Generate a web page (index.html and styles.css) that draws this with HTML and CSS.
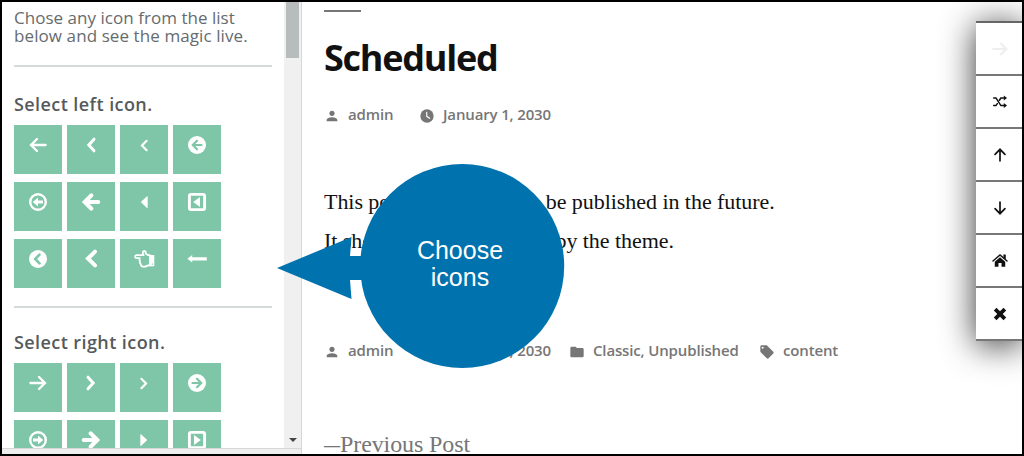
FILE: index.html
```
<!DOCTYPE html>
<html>

<head>
  <meta charset="utf-8">
  <link rel="stylesheet" href="styles.css">
  <title>Scheduled</title>
</head>

<body>
  <svg class="defs">
    <symbol id="arrow" viewBox="0 0 20 20">
      <path class="line" d="M17.600 10H3.500M9 4L3 10L9 16" stroke-width="2.300"/>
    </symbol>
    <symbol id="thin-arrow" viewBox="0 0 20 20">
      <path class="line" d="M16.500 10H4M9.200 4.500L3.700 10L9.200 15.500" stroke-width="1.900"/>
    </symbol>
    <symbol id="chevron" viewBox="0 0 20 20">
      <path class="line" d="M13 4.2L7.8 10L13 15.8" stroke-width="3"/>
    </symbol>
    <symbol id="angle" viewBox="0 0 20 20">
      <path class="line" d="M12.6 5.8L8 10.5L12.6 15.2" stroke-width="2.200"/>
    </symbol>
    <symbol id="circle-arrow" viewBox="0 0 20 20">
      <circle cx="10" cy="10" r="9"/>
      <path class="line cut" d="M14.500 10H6M10 5.8L5.8 10L10 14.2" stroke-width="2.2"/>
    </symbol>
    <symbol id="ring-arrow" viewBox="0 0 20 20">
      <circle class="line" cx="10" cy="10" r="7.8" stroke-width="2.4"/>
      <path d="M4.8 10L10 5.5V8.4H15V11.6H10V14.5Z"/>
    </symbol>
    <symbol id="bold-arrow" viewBox="0 0 20 20">
      <path class="line" d="M17.2 10H6M10.3 3.4L3.8 10L10.3 16.6" stroke-width="4.2"/>
    </symbol>
    <symbol id="caret" viewBox="0 0 20 20">
      <path d="M6.8 10L13 4.2Q13.7 4 13.7 5V15.2Q13.7 16.2 13 16Z"/>
    </symbol>
    <symbol id="square-caret" viewBox="0 0 20 20">
      <rect class="line" x="2.4" y="2.4" width="15.2" height="15.2" rx="1.5" stroke-width="2.9"/>
      <path d="M6.2 10L13 5V15Z"/>
    </symbol>
    <symbol id="circle-chevron" viewBox="0 0 20 20">
      <circle cx="10" cy="10" r="9"/>
      <path class="line cut" d="M11.5 5.6L7.2 10L11.5 14.4" stroke-width="2.6"/>
    </symbol>
    <symbol id="bold-chevron" viewBox="0 0 20 20">
      <path class="line" d="M14 2.600L7 9.500L14 16.400" stroke-width="4"/>
    </symbol>
    <symbol id="hand" viewBox="0 0 21 20">
      <path class="line" stroke-linejoin="round" d="M16 6.200H14.200L11.700 4.500V3Q11 1.600 9.800 2Q8.600 2.300 8.800 4L9.600 6.200H2.700Q1 6.300 1.100 7.700Q1.200 9.100 2.700 9.200H5.800Q5 11 6 12.200Q5.300 14 6.700 15Q6.800 17.400 9 17.600H11.500L14 16.400H16" stroke-width="1.800"/>
      <path d="M15 6H20.300V17.300H15Z"/>
      <path class="line cut" d="M18.300 14.800V15.400" stroke-width="1"/>
    </symbol>
    <symbol id="long-arrow" viewBox="0 0 20 20">
      <path d="M0.4 9.8L5.2 6V8.200H19.8V11.400H5.2V13.6Z"/>
    </symbol>
    <symbol id="person" viewBox="0 0 24 24">
      <path d="M12 12c2.2 0 4-1.8 4-4s-1.800-4-4-4-4 1.800-4 4 1.800 4 4 4zm0 2c-2.700 0-8 1.300-8 4v2h16v-2c0-2.700-5.300-4-8-4z"/>
    </symbol>
    <symbol id="clock" viewBox="0 0 24 24">
      <circle cx="12" cy="12" r="10"/>
      <path class="line cut-white" d="M11.600 6.500V12.500L16 15.500" stroke-width="1.700"/>
    </symbol>
    <symbol id="folder" viewBox="0 0 24 24">
      <path d="M10 4H4c-1.100 0-2 .9-2 2v12c0 1.100.9 2 2 2h16c1.100 0 2-.9 2-2V8c0-1.100-.9-2-2-2h-8l-2-2z"/>
    </symbol>
    <symbol id="tag" viewBox="0 0 24 24">
      <path fill-rule="evenodd" d="M21.400 11.600l-9-9C12 2.200 11.500 2 11 2H4c-1.100 0-2 .9-2 2v7c0 .5.200 1 .6 1.400l9 9c.8.8 2 .8 2.800 0l7-7c.8-.8.8-2 0-2.800zM5.500 7a1.500 1.500 0 1 1 0-3 1.500 1.500 0 0 1 0 3z"/>
    </symbol>
    <symbol id="shuffle" viewBox="0 0 20 20">
      <path class="line" d="M3 5.500H5.500L11 14H15M3 14H5.500L7 11.800M9.300 8L11 5.500H15" stroke-width="1.700"/>
      <path d="M14.200 2.700L17.800 5.500L14.200 8.300ZM14.200 11.200L17.800 14L14.200 16.800Z"/>
    </symbol>
    <symbol id="home" viewBox="0 0 20 20">
      <path class="line" d="M2.200 10L10 3.400L17.800 10" stroke-width="1.600"/>
      <path d="M13.800 2.800H16.400V8.200L13.800 6ZM4.200 10.800L10 5.800L15.800 10.800V16.500H11.700V12.300H8.300V16.500H4.200Z"/>
    </symbol>
    <symbol id="cross" viewBox="0 0 20 20">
      <path class="line butt" d="M4.600 4.600L15.400 15.400M15.400 4.600L4.600 15.400" stroke-width="4.200"/>
    </symbol>
  </svg>

  <div class="screen">
    <div class="sidebar">
      <div class="panel">
        <div class="controls">
          <p class="hint">Chose any icon from the list<br><span class="hint-end">below and see the magic live.</span></p>
          <hr>
          <h3>Select left icon.</h3>
          <div class="icons">
            <div class="tile"><svg><use href="#arrow"/></svg></div>
            <div class="tile"><svg><use href="#chevron"/></svg></div>
            <div class="tile"><svg><use href="#angle"/></svg></div>
            <div class="tile"><svg><use href="#circle-arrow"/></svg></div>
            <div class="tile"><svg><use href="#ring-arrow"/></svg></div>
            <div class="tile"><svg><use href="#bold-arrow"/></svg></div>
            <div class="tile"><svg><use href="#caret"/></svg></div>
            <div class="tile"><svg><use href="#square-caret"/></svg></div>
            <div class="tile"><svg><use href="#circle-chevron"/></svg></div>
            <div class="tile"><svg><use href="#bold-chevron"/></svg></div>
            <div class="tile"><svg class="wide"><use href="#hand"/></svg></div>
            <div class="tile"><svg><use href="#long-arrow"/></svg></div>
          </div>
          <hr class="second">
          <h3 class="right-title">Select right icon.</h3>
          <div class="icons right">
            <div class="tile"><svg><use href="#arrow"/></svg></div>
            <div class="tile"><svg><use href="#chevron"/></svg></div>
            <div class="tile"><svg><use href="#angle"/></svg></div>
            <div class="tile"><svg><use href="#circle-arrow"/></svg></div>
            <div class="tile"><svg><use href="#ring-arrow"/></svg></div>
            <div class="tile"><svg><use href="#bold-arrow"/></svg></div>
            <div class="tile"><svg><use href="#caret"/></svg></div>
            <div class="tile"><svg><use href="#square-caret"/></svg></div>
          </div>
        </div>
        <div class="scrollbar">
          <div class="thumb"></div>
          <div class="down"></div>
        </div>
      </div>
      <div class="sidebar-footer"></div>
    </div>

    <div class="article">
      <div class="rule"></div>
      <h1>Scheduled</h1>
      <div class="meta">
        <span class="item author"><svg><use href="#person"/></svg>admin</span>
        <span class="item date"><svg><use href="#clock"/></svg>January 1, 2030</span>
      </div>
      <div class="content">
        <p>This post is scheduled to be published in the future.</p>
        <p>It should not be displayed by the theme.</p>
      </div>
      <div class="meta">
        <span class="item author"><svg><use href="#person"/></svg>admin</span>
        <span class="item date"><svg><use href="#clock"/></svg>January 1, 2030</span>
        <span class="item cats"><svg><use href="#folder"/></svg>Classic, Unpublished</span>
        <span class="item tags"><svg><use href="#tag"/></svg>content</span>
      </div>
      <div class="previous"><span class="dash">—</span>Previous Post</div>
    </div>

    <div class="nav">
      <div class="nav-btn off"><svg class="flip"><use href="#arrow"/></svg></div>
      <div class="nav-btn"><svg><use href="#shuffle"/></svg></div>
      <div class="nav-btn"><svg class="up"><use href="#thin-arrow"/></svg></div>
      <div class="nav-btn"><svg class="dn"><use href="#thin-arrow"/></svg></div>
      <div class="nav-btn"><svg><use href="#home"/></svg></div>
      <div class="nav-btn"><svg><use href="#cross"/></svg></div>
    </div>

    <div class="callout">
      <svg viewBox="0 0 288 204">
        <path d="M0 104L74.500 73L73 92H90V116H73L74.500 135Z"/>
        <circle cx="185.200" cy="102" r="102"/>
      </svg>
      <div class="callout-text">Choose<br>icons</div>
    </div>
  </div>
</body>

</html>
```

FILE: styles.css
```
* {
  box-sizing: border-box;
}

body {
  margin: 0;
  font-family: "Open Sans", "Noto Sans", sans-serif;
}

h1, h3, p, hr {
  margin: 0;
}

svg {
  display: block;
  width: 20px;
  height: 20px;
  fill: currentColor;
  flex: none;
}

.defs {
  position: absolute;
  width: 0;
  height: 0;
}

.line {
  fill: none;
  stroke: currentColor;
  stroke-linecap: round;
}

.butt {
  stroke-linecap: butt;
}

.cut {
  stroke: #7ec6a7;
}

.cut-white {
  stroke: #fff;
}

.screen {
  position: relative;
  display: flex;
  width: 1024px;
  height: 456px;
  border: 2px solid #000;
  background: #fff;
  overflow: hidden;
}

/* sidebar */
.sidebar {
  display: flex;
  flex-direction: column;
  width: 300px;
  height: 452px;
  border-right: 1px solid #d4d8d8;
  flex: none;
}

.panel {
  display: flex;
  height: 446px;
  overflow: hidden;
}

.sidebar-footer {
  height: 6px;
  background: #eee;
  border-top: 1px solid #d4d8d8;
}

.controls {
  width: 282px;
  padding: 7px 12px 0;
  color: #555a5d;
}

.hint {
  height: 56px;
  color: #666b6e;
  font-size: 17px;
  line-height: 18px;
  white-space: nowrap;
  letter-spacing: 0.03px;
}

.hint-end {
  letter-spacing: 0.09px;
}

.controls hr {
  height: 2px;
  border: 0;
  background: #d5dadb;
}

.controls h3 {
  height: 58px;
  padding-top: 25px;
  font-size: 18px;
  line-height: 24px;
  font-weight: 600;
  letter-spacing: 0.42px;
  white-space: nowrap;
}

.controls hr.second {
  margin-top: 18px;
}

.controls h3.right-title {
  height: 55px;
  padding-top: 22px;
}

.icons {
  display: grid;
  grid-template-columns: repeat(4, 48px);
  grid-auto-rows: 49px;
  gap: 8px 5px;
}

.tile {
  display: flex;
  justify-content: center;
  padding-top: 10px;
  background: #7ec6a7;
  color: #fff;
}

.right svg, .flip {
  transform: scaleX(-1);
}

.tile .wide {
  width: 21px;
}

.scrollbar {
  display: flex;
  flex-direction: column;
  justify-content: space-between;
  align-items: center;
  width: 17px;
  background: #f0f0f0;
}

.thumb {
  width: 13px;
  height: 56px;
  background: #b7bcbc;
}

.down {
  margin-bottom: 6px;
  border: 4px solid transparent;
  border-top-color: #444;
  border-bottom: 0;
}

/* post */
.article {
  flex: 1;
  padding: 8px 0 0 22px;
  white-space: nowrap;
}

.rule {
  width: 37px;
  height: 2px;
  background: #767676;
}

h1 {
  margin-top: 21px;
  height: 49px;
  color: #111;
  font-size: 36px;
  line-height: 50px;
  letter-spacing: -1.25px;
}

.meta {
  display: flex;
  height: 24px;
  margin-top: 20px;
  color: #767676;
  font-size: 15px;
  font-weight: 600;
  line-height: 24px;
  letter-spacing: -0.15px;
}

.item {
  display: flex;
  align-items: center;
}

.item svg {
  width: 16px;
  height: 16px;
  margin: 3px 8px 0 0;
}

.author {
  width: 95px;
}

.date {
  width: 150px;
}

.cats {
  width: 190px;
}

.content {
  height: 192px;
  padding-top: 56px;
  color: #111;
  font-family: "Liberation Serif", serif;
  font-size: 22px;
  line-height: 39px;
  letter-spacing: -0.05px;
}

.previous {
  margin-top: 67px;
  color: #767676;
  font-family: "Liberation Serif", serif;
  font-size: 24px;
  line-height: 30px;
  letter-spacing: -0.1px;
}

.dash {
  display: inline-block;
  width: 16px;
  transform: scaleX(0.67);
  transform-origin: left;
}

/* floating buttons on the right edge */
.nav {
  position: absolute;
  top: 19px;
  right: 0;
  width: 46px;
  background: #777;
  border-top: 2px solid #666;
  box-shadow: 0 4px 34px #333;
}

.nav-btn {
  display: flex;
  align-items: center;
  justify-content: center;
  height: 53px;
  padding-left: 1px;
  background: #fff;
  border-bottom: 2px solid #777;
  color: #111;
}

.nav-btn svg {
  width: 18px;
  height: 18px;
}

.nav-btn.off {
  color: #eee;
}

.nav-btn .up {
  transform: rotate(90deg);
}

.nav-btn .dn {
  transform: rotate(-90deg);
}

/* callout */
.callout {
  position: absolute;
  left: 275px;
  top: 162px;
  width: 288px;
  height: 204px;
  color: #0072ae;
}

.callout svg {
  width: 288px;
  height: 204px;
}

.callout-text {
  position: absolute;
  left: 83px;
  top: 73px;
  width: 200px;
  color: #fff;
  font-family: "Liberation Sans", sans-serif;
  font-size: 25px;
  line-height: 27px;
  text-align: center;
}
```
